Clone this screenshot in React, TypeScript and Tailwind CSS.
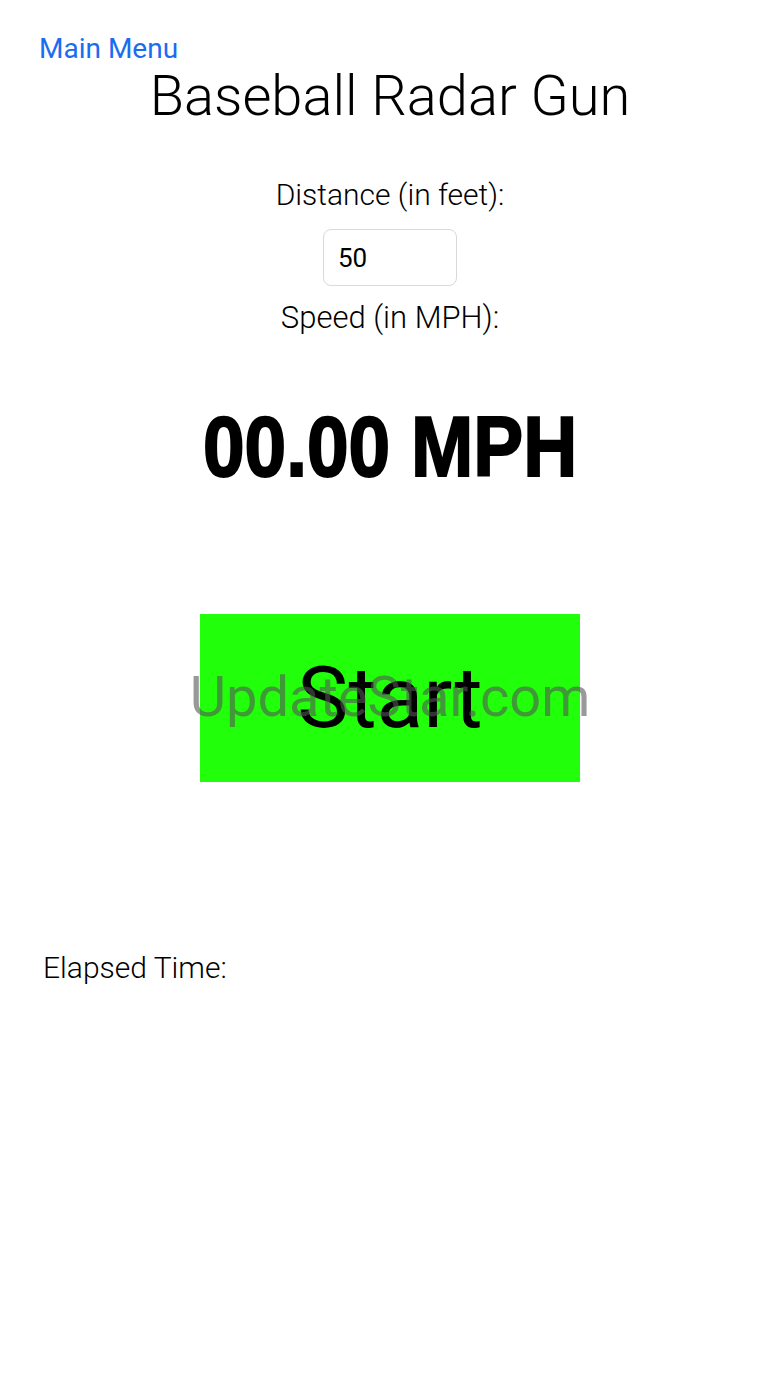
import React from 'react'

export default function App() {
  const [distance, setDistance] = React.useState('50')

  return (
    <div className="relative min-h-[1387px] w-full bg-white font-['Roboto','Liberation_Sans',sans-serif] text-black">
      <div className="pl-[39px] pt-[31px]">
        <button className="text-[28px] leading-[36px] font-normal text-[#1a6cf0]">Main Menu</button>
      </div>

      <h1 className="mt-[-4px] text-center text-[56px] font-light leading-[66px]">
        Baseball Radar Gun
      </h1>

      <div className="mt-[48px] flex flex-col items-center">
        <label className="text-[30px] font-light leading-[36px]">Distance (in feet):</label>
        <input
          value={distance}
          onChange={e => setDistance(e.target.value)}
          className="mt-[16px] h-[57px] w-[134px] rounded-[8px] border border-[#d9d9d9] px-[14px] text-[26px] text-black outline-none"
        />
        <div className="mt-[14px] text-[31px] font-light leading-[36px]">Speed (in MPH):</div>

        <div className="mt-[66px] scale-x-[0.87] font-['Liberation_Sans',sans-serif] text-[86px] font-bold leading-[88px] [-webkit-text-stroke:2px_black]">
          00.00 MPH
        </div>

        <button className="mt-[124px] flex h-[168px] w-[380px] items-center justify-center bg-[#22ff0a] text-[86px] leading-none text-black">
          Start
        </button>
      </div>

      <div className="mt-[168px] pl-[43px] text-[30px] font-light leading-[36px]">Elapsed Time:</div>

      {/* watermark */}
      <div className="pointer-events-none absolute left-0 right-0 top-[665px] text-center text-[56px] leading-[64px] text-[#555555]/60">
        UpdateStar.com
      </div>
    </div>
  )
}
